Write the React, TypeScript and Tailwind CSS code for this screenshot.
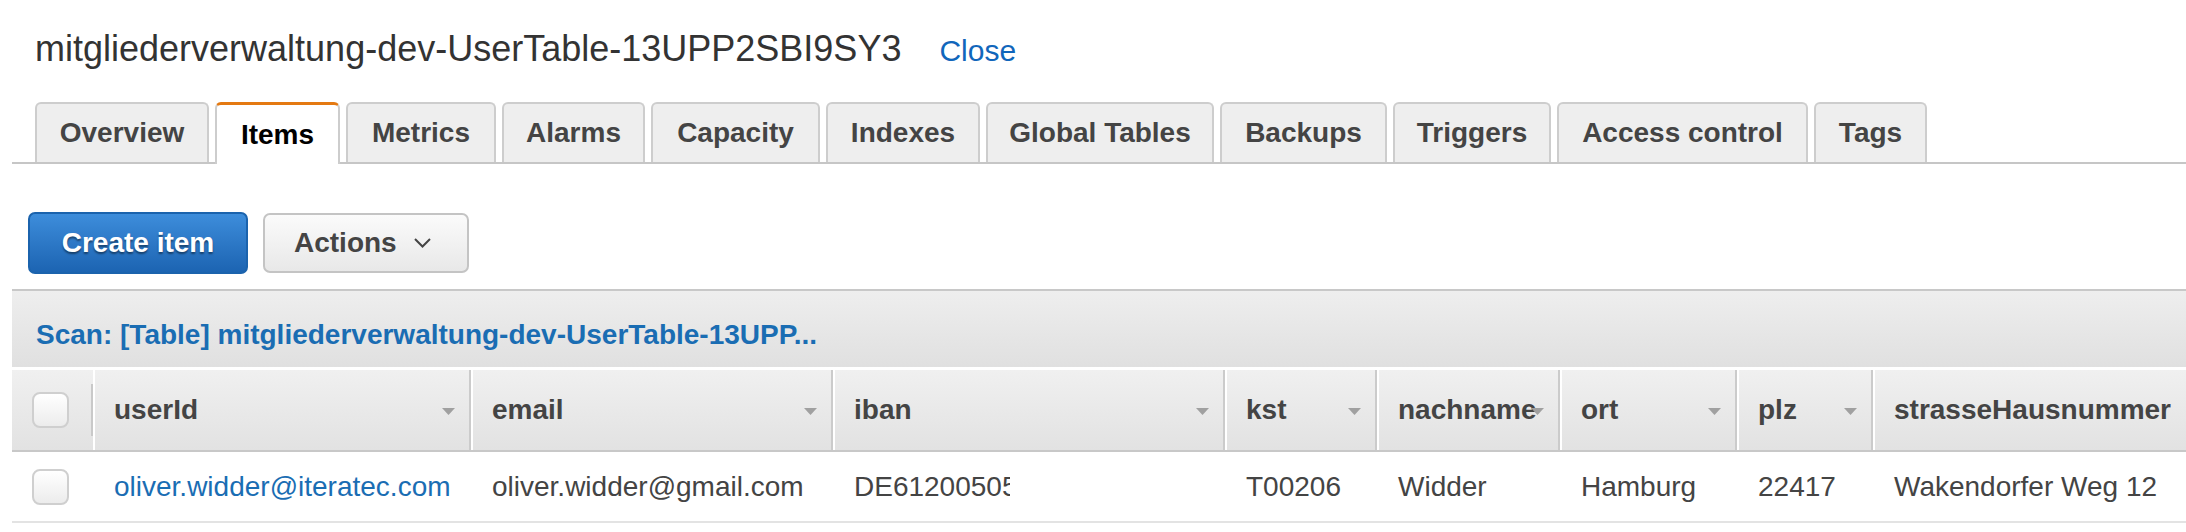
import React from "react";

const tabs = [
  { label: "Overview", w: "w-[174px]" },
  { label: "Items", w: "w-[125px]", active: true },
  { label: "Metrics", w: "w-[150px]" },
  { label: "Alarms", w: "w-[143px]" },
  { label: "Capacity", w: "w-[169px]" },
  { label: "Indexes", w: "w-[154px]" },
  { label: "Global Tables", w: "w-[228px]" },
  { label: "Backups", w: "w-[167px]" },
  { label: "Triggers", w: "w-[158px]" },
  { label: "Access control", w: "w-[251px]" },
  { label: "Tags", w: "w-[113px]" },
];

const columns = [
  { key: "userId", w: "w-[378px]" },
  { key: "email", w: "w-[362px]" },
  { key: "iban", w: "w-[392px]" },
  { key: "kst", w: "w-[152px]" },
  { key: "nachname", w: "w-[183px]" },
  { key: "ort", w: "w-[177px]" },
  { key: "plz", w: "w-[136px]" },
  { key: "strasseHausnummer", w: "flex-1", noSort: true },
];

const row: Record<string, string> = {
  userId: "oliver.widder@iteratec.com",
  email: "oliver.widder@gmail.com",
  iban: "DE61200505500123456789",
  kst: "T00206",
  nachname: "Widder",
  ort: "Hamburg",
  plz: "22417",
  strasseHausnummer: "Wakendorfer Weg 12",
};

const Checkbox = () => (
  <div className="w-[37px] h-[36px] rounded-[8px] border-2 border-[#cfcfcf] bg-gradient-to-b from-white to-[#ececec]" />
);

const SortArrow = () => (
  <svg
    className="absolute right-[14px] top-[38px]"
    width="13"
    height="7"
    viewBox="0 0 13 7"
  >
    <polygon points="0,0 13,0 6.5,7" fill="#a0a0a0" />
  </svg>
);

export default function App() {
  return (
    <div className="w-[2186px] h-[532px] overflow-hidden bg-white font-['Liberation_Sans',Arial,sans-serif]">
      <div className="pl-[35px] pt-[31px] flex items-baseline gap-[38px]">
        <h1 className="text-[36px] leading-[36px] text-[#333]">
          mitgliederverwaltung-dev-UserTable-13UPP2SBI9SY3
        </h1>
        <a className="text-[30px] leading-[36px] text-[#1166bb]">Close</a>
      </div>

      <div className="ml-[12px] mt-[33px] pl-[23px] flex items-start gap-[6px] border-b-2 border-[#c6c6c6]">
        {tabs.map((t) =>
          t.active ? (
            <div
              key={t.label}
              className={`${t.w} relative z-10 h-[62px] -mb-[2px] flex items-center justify-center bg-white border-2 border-b-0 border-[#cdcdcd] border-t-[3px] border-t-[#e47911] rounded-t-[6px] text-[28px] font-bold text-black`}
            >
              {t.label}
            </div>
          ) : (
            <div
              key={t.label}
              className={`${t.w} h-[60px] flex items-center justify-center bg-[#eeeeee] border-2 border-b-0 border-[#cdcdcd] rounded-t-[6px] text-[28px] font-bold text-[#444]`}
            >
              {t.label}
            </div>
          )
        )}
      </div>

      <div className="pl-[28px] mt-[48px] flex items-center gap-[15px]">
        <button className="w-[220px] h-[62px] rounded-[7px] border-2 border-[#1b63ad] bg-gradient-to-b from-[#3d8ddb] to-[#1c64b2] text-[28px] font-bold text-white [text-shadow:0_2px_2px_rgba(0,0,0,0.45)]">
          Create item
        </button>
        <button className="w-[206px] h-[60px] rounded-[7px] border-2 border-[#c4c4c4] bg-gradient-to-b from-[#fbfbfb] to-[#e8e8e8] flex items-center pl-[29px] gap-[17px] text-[28px] font-bold text-[#444]">
          Actions
          <svg width="17" height="10" viewBox="0 0 17 10">
            <polyline
              points="1,1 8.5,8.5 16,1"
              fill="none"
              stroke="#444"
              strokeWidth="2"
            />
          </svg>
        </button>
      </div>

      <div className="ml-[12px] mt-[15px]">
        <div className="h-[78px] border-t-2 border-[#c8c8c8] bg-gradient-to-b from-[#eeeeee] to-[#e0e0e0] pl-[24px] pt-[30px]">
          <p className="text-[28px] leading-[28px] font-bold text-[#1a6db3]">
            Scan: [Table] mitgliederverwaltung-dev-UserTable-13UPP...
          </p>
        </div>

        <div className="mt-[3px] h-[82px] flex border-b-2 border-[#c8c8c8] bg-gradient-to-b from-[#f0f0f0] to-[#e2e2e2]">
          <div className="w-[81px] flex items-center justify-between pl-[20px]">
            <Checkbox />
            <div className="w-[2px] h-[52px] bg-[#c9c9c9]" />
          </div>
          {columns.map((c) => (
            <div
              key={c.key}
              className={`${c.w} relative h-full flex items-center border-l-2 border-l-white ${
                c.noSort ? "" : "border-r-2 border-r-[#cbcbcb]"
              } pl-[19px] text-[28px] font-bold text-[#444] whitespace-nowrap`}
            >
              {c.key}
              {!c.noSort && <SortArrow />}
            </div>
          ))}
        </div>

        <div className="h-[71px] flex items-center border-b-2 border-[#e3e3e3]">
          <div className="w-[81px] pl-[20px]">
            <Checkbox />
          </div>
          {columns.map((c) => (
            <div
              key={c.key}
              className={`${c.w} pl-[21px] text-[28px] whitespace-nowrap ${
                c.key === "userId" ? "text-[#1a6db3]" : "text-[#444]"
              }`}
            >
              {c.key === "iban" ? (
                <span className="inline-block w-[156px] overflow-hidden align-bottom">
                  {row[c.key]}
                </span>
              ) : (
                row[c.key]
              )}
            </div>
          ))}
        </div>
      </div>
    </div>
  );
}
